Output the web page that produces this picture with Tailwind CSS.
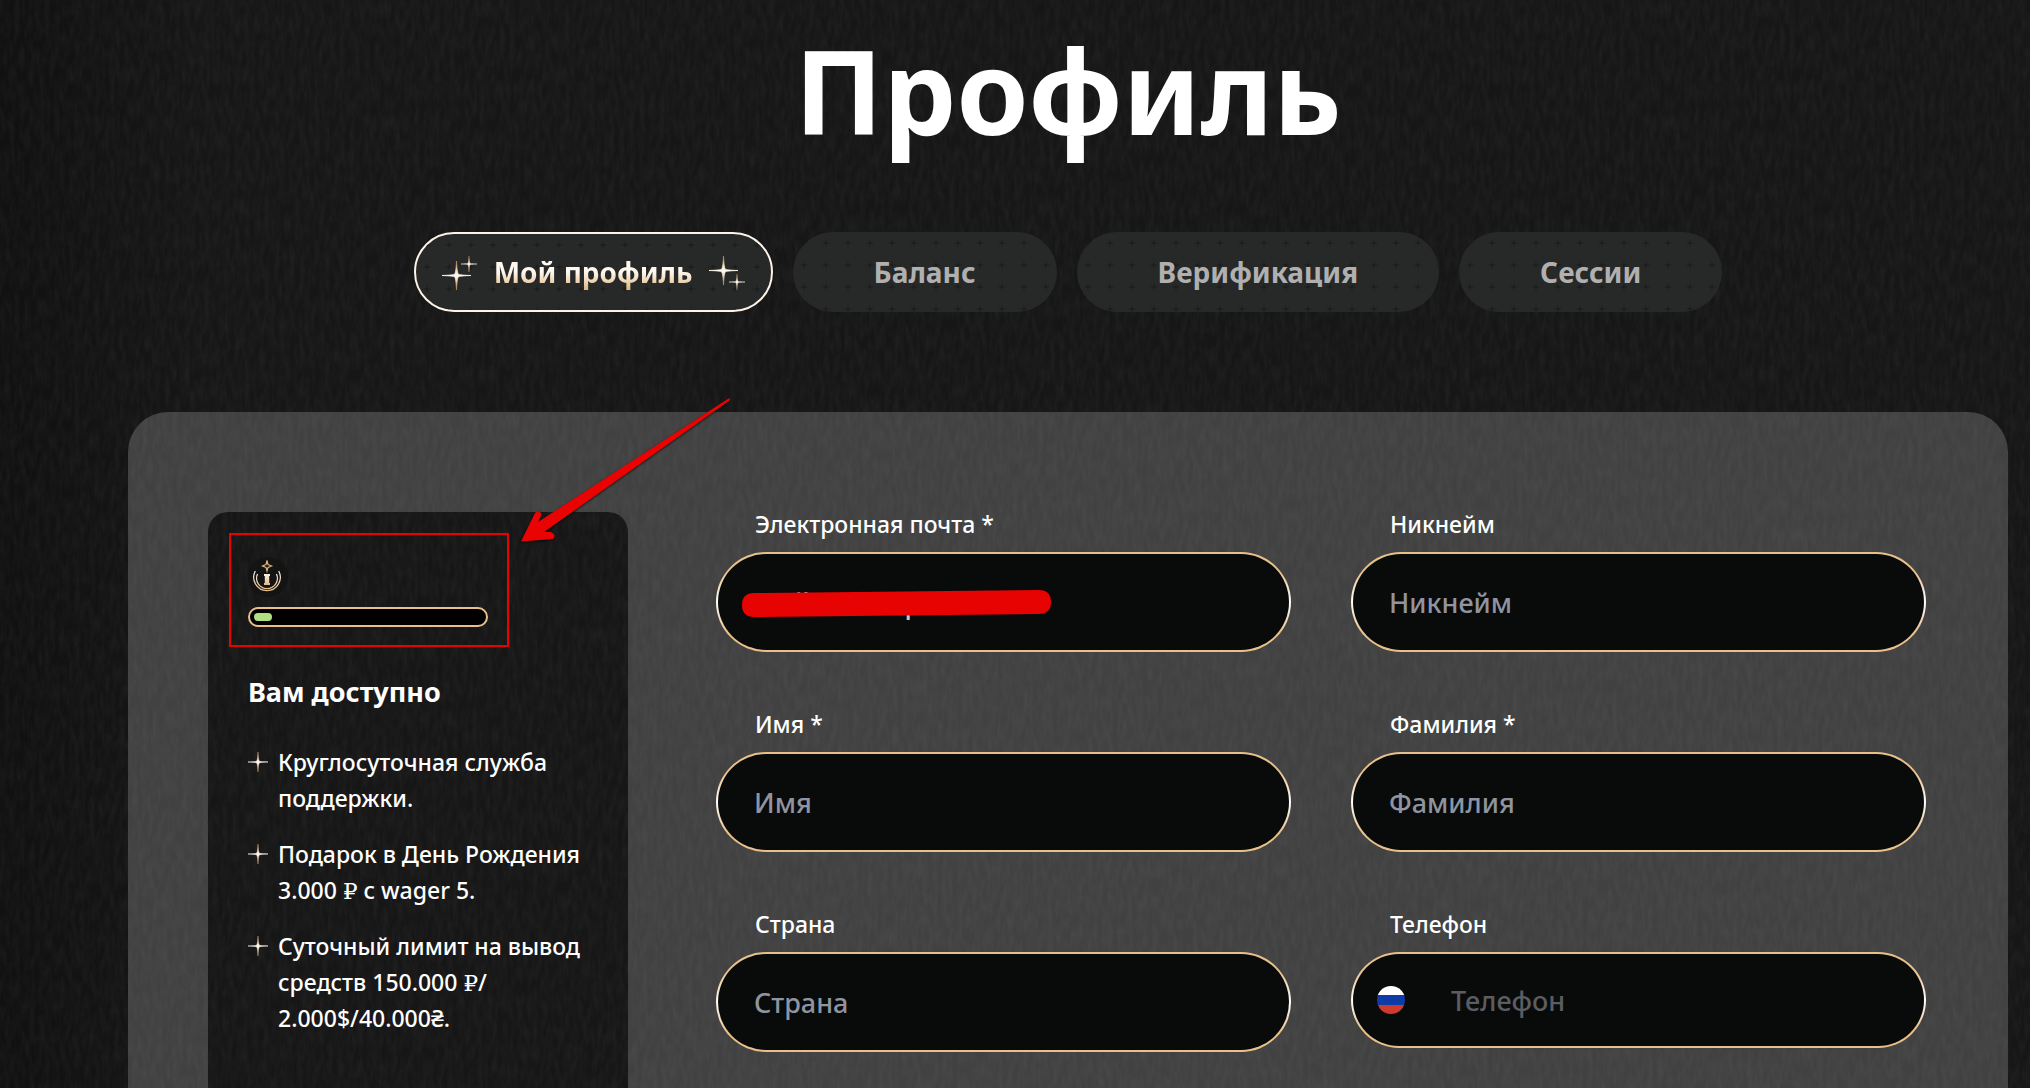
<!DOCTYPE html>
<html lang="ru">
<head>
    <meta charset="UTF-8">
    <meta name="viewport" content="width=device-width, initial-scale=1.0">
    <title>Профиль</title>
    <script src="https://cdn.jsdelivr.net/npm/@tailwindcss/browser@4"></script>
</head>
<body class="relative min-h-screen overflow-x-hidden bg-[#161616] font-['Noto_Sans','Open_Sans',sans-serif] text-white">
    <!-- Shared gradients, patterns and symbols -->
    <svg class="absolute size-0" aria-hidden="true">
        <defs>
            <linearGradient id="gold" x1="0" y1="0" x2="0" y2="1">
                <stop offset="0.05" stop-color="#b98a4e"/>
                <stop offset="0.42" stop-color="#fff3e4"/>
                <stop offset="0.55" stop-color="#fff8ef"/>
                <stop offset="0.95" stop-color="#b98a4e"/>
            </linearGradient>
            <linearGradient id="goldSoft" x1="0" y1="0" x2="0" y2="1">
                <stop offset="0" stop-color="#fdf3e6"/>
                <stop offset="1" stop-color="#e3bb85"/>
            </linearGradient>
            <pattern id="crosses" width="22" height="22" patternUnits="userSpaceOnUse">
                <path d="M11 6 L11.7 10.3 L16 11 L11.7 11.7 L11 16 L10.3 11.7 L6 11 L10.3 10.3 Z" fill="#1a1c1b"/>
            </pattern>
            <filter id="linen" x="0" y="0" width="100%" height="100%">
                <feTurbulence type="fractalNoise" baseFrequency="0.2 0.06" numOctaves="3" seed="4"/>
                <feColorMatrix values="0 0 0 0 1  0 0 0 0 1  0 0 0 0 1  0.07 0 0 0 -0.022"/>
            </filter>
            <symbol id="star" viewBox="0 0 28 28">
                <path d="M14 0 C14.4 9 15 12.6 16.4 13.1 C18 13.5 22 13.8 28 14 C22 14.2 18 14.5 16.4 14.9 C15 15.4 14.4 19 14 28 C13.6 19 13 15.4 11.6 14.9 C10 14.5 6 14.2 0 14 C6 13.8 10 13.5 11.6 13.1 C13 12.6 13.6 9 14 0 Z" fill="url(#gold)" stroke="url(#gold)" stroke-width="0.8"/>
            </symbol>
        </defs>
    </svg>
    <div class="absolute inset-0 bg-linear-to-r from-black/25 via-transparent via-10% to-transparent"></div>
    <svg class="absolute inset-0 size-full" aria-hidden="true"><rect width="100%" height="100%" filter="url(#linen)"/></svg>

    <main class="relative pt-5 pr-[22px] pl-32">
        <h1 class="text-center text-[116px] leading-[140px] font-bold">Профиль</h1>

        <!-- Tabs -->
        <nav class="mt-[72px] flex justify-center gap-5 text-[28px] leading-10 font-bold">
            <button class="relative flex h-20 items-center gap-4 overflow-hidden rounded-full border-2 border-[#fdf3e6] bg-[#272928] px-[26px]">
                <svg class="absolute inset-0 size-full" aria-hidden="true"><rect width="100%" height="100%" fill="url(#crosses)"/></svg>
                <svg class="relative h-9 w-9" viewBox="0 0 36 36" aria-hidden="true">
                    <use href="#star" x="0" y="7" width="29" height="29"/>
                    <use href="#star" x="19" y="2" width="16" height="16"/>
                </svg>
                <span class="relative bg-linear-to-b from-[#fff8ef] from-50% to-[#e3bb85] to-90% bg-clip-text text-transparent">Мой профиль</span>
                <svg class="relative h-9 w-9" viewBox="0 0 36 36" aria-hidden="true">
                    <use href="#star" x="0" y="2" width="29" height="29"/>
                    <use href="#star" x="20" y="20" width="16" height="16"/>
                </svg>
            </button>
            <button class="relative h-20 overflow-hidden rounded-full bg-[#272928] px-[81px] text-[#b0b0b0]">
                <svg class="absolute inset-0 size-full" aria-hidden="true"><rect width="100%" height="100%" fill="url(#crosses)"/></svg>
                <span class="relative">Баланс</span>
            </button>
            <button class="relative h-20 overflow-hidden rounded-full bg-[#272928] px-[81px] text-[#b0b0b0]">
                <svg class="absolute inset-0 size-full" aria-hidden="true"><rect width="100%" height="100%" fill="url(#crosses)"/></svg>
                <span class="relative">Верификация</span>
            </button>
            <button class="relative h-20 overflow-hidden rounded-full bg-[#272928] px-[81px] text-[#b0b0b0]">
                <svg class="absolute inset-0 size-full" aria-hidden="true"><rect width="100%" height="100%" fill="url(#crosses)"/></svg>
                <span class="relative">Сессии</span>
            </button>
        </nav>

        <!-- Profile panel -->
        <section class="relative mt-[100px] flex items-stretch gap-[88px] rounded-t-[40px] bg-[#414141] pt-[100px] pr-[82px] pl-20">
            <svg class="absolute inset-0 size-full rounded-t-[40px]" aria-hidden="true"><rect width="100%" height="100%" filter="url(#linen)"/></svg>

            <aside class="relative w-[420px] shrink-0 rounded-t-[20px] bg-[#161616] px-10 pt-[45px]">
                <svg class="absolute inset-0 size-full rounded-t-[20px]" aria-hidden="true"><rect width="100%" height="100%" filter="url(#linen)"/></svg>
                <div class="relative">
                    <!-- Level badge -->
                    <svg class="block size-10" viewBox="0 0 40 40" role="img" aria-label="Уровень I">
                        <circle cx="20" cy="20" r="20" fill="#141414"/>
                        <path d="M19 3.5 L20 7.6 L23.5 9 L20 10.4 L19 14 L18 10.4 L14.5 9 L18 7.6 Z" fill="none" stroke="#dcb27c" stroke-width="1.2"/>
                        <path d="M7.3 14 A13.3 13.3 0 1 0 30.7 14" fill="none" stroke="url(#goldSoft)" stroke-width="1.2"/>
                        <path d="M9.5 17 A10.4 10.4 0 1 0 28.5 17" fill="none" stroke="url(#goldSoft)" stroke-width="1.2"/>
                        <path d="M16 17 H22 V19 H21.2 V26 H22 V28 H16 V26 H16.8 V19 H16 Z" fill="url(#goldSoft)"/>
                    </svg>
                    <div class="mt-[10px] h-5 w-60 rounded-full border-2 border-[#e9c08a] bg-black p-1" role="progressbar" aria-valuenow="8" aria-valuemin="0" aria-valuemax="100">
                        <div class="h-full rounded-full bg-[#b0e080]" style="width: 8%"></div>
                    </div>

                    <h2 class="mt-[45px] text-[27px] leading-10 font-bold">Вам доступно</h2>
                    <ul class="mt-8 space-y-5 text-[23px] leading-9 font-medium whitespace-nowrap">
                        <li class="flex gap-[10px]">
                            <svg class="mt-2 size-5 shrink-0" aria-hidden="true"><use href="#star" width="20" height="20"/></svg>
                            <span>Круглосуточная служба<br>поддержки.</span>
                        </li>
                        <li class="flex gap-[10px]">
                            <svg class="mt-2 size-5 shrink-0" aria-hidden="true"><use href="#star" width="20" height="20"/></svg>
                            <span>Подарок в День Рождения<br>3.000 <span class="font-['DejaVu_Serif',serif] leading-none">₽</span> с wager 5.</span>
                        </li>
                        <li class="flex gap-[10px]">
                            <svg class="mt-2 size-5 shrink-0" aria-hidden="true"><use href="#star" width="20" height="20"/></svg>
                            <span>Суточный лимит на вывод<br>средств 150.000 <span class="font-['DejaVu_Serif',serif] leading-none">₽</span>/<br>2.000$/40.000₴.</span>
                        </li>
                    </ul>
                </div>

                <!-- Highlight frame around the level block -->
                <div class="absolute top-[21px] left-[21px] h-[114px] w-[280px] border-2 border-[#e60302]"></div>
                <svg class="absolute -top-[122px] left-[302px] h-[162px] w-[230px] drop-shadow-[0_1px_1px_rgba(0,0,0,0.7)]" viewBox="0 0 230 162" aria-hidden="true">
                    <path d="M218.5 8.5 Q221 8 219.5 10.5 L34 142 L41 142 Q47 145 43 149 L11 151.500 L25 123 Q28 119 31 123 Q32 125 28 132 Z" fill="#e90303"/>
                </svg>
            </aside>

            <form class="relative grid flex-1 grid-cols-2 content-start gap-x-[60px] gap-y-[60px] pb-10">
                <div class="relative">
                    <label for="email" class="block pl-[39px] text-[23px] leading-6 font-medium">Электронная почта *</label>
                    <div class="mt-4 rounded-full bg-linear-to-b from-[#e9c08a] from-20% via-white to-[#e9c08a] to-80% p-0.5">
                        <input id="email" type="email" value="mail@example.com" class="block h-24 w-full rounded-full bg-[#080b0a] px-9 text-[27px] font-medium text-[#c8c8c8] outline-none">
                    </div>
                    <!-- Marker over the address -->
                    <svg class="absolute top-[76px] left-[24px] h-8 w-[314px]" viewBox="0 0 314 32" aria-hidden="true">
                        <path d="M2 17 Q2 5 14 5 L299 2 Q311 2 311 14 Q311 26 299 26 L14 29 Q2 29 2 17 Z" fill="#e60302"/>
                    </svg>
                </div>
                <div>
                    <label for="nickname" class="block pl-[39px] text-[23px] leading-6 font-medium">Никнейм</label>
                    <div class="mt-4 rounded-full bg-linear-to-b from-[#e9c08a] from-20% via-white to-[#e9c08a] to-80% p-0.5">
                        <input id="nickname" type="text" placeholder="Никнейм" class="block h-24 w-full rounded-full bg-[#080b0a] px-9 text-[27px] font-medium outline-none placeholder:text-[#9094a0]">
                    </div>
                </div>
                <div>
                    <label for="name" class="block pl-[39px] text-[23px] leading-6 font-medium">Имя *</label>
                    <div class="mt-4 rounded-full bg-linear-to-b from-[#e9c08a] from-20% via-white to-[#e9c08a] to-80% p-0.5">
                        <input id="name" type="text" placeholder="Имя" class="block h-24 w-full rounded-full bg-[#080b0a] px-9 text-[27px] font-medium outline-none placeholder:text-[#9094a0]">
                    </div>
                </div>
                <div>
                    <label for="surname" class="block pl-[39px] text-[23px] leading-6 font-medium">Фамилия *</label>
                    <div class="mt-4 rounded-full bg-linear-to-b from-[#e9c08a] from-20% via-white to-[#e9c08a] to-80% p-0.5">
                        <input id="surname" type="text" placeholder="Фамилия" class="block h-24 w-full rounded-full bg-[#080b0a] px-9 text-[27px] font-medium outline-none placeholder:text-[#9094a0]">
                    </div>
                </div>
                <div>
                    <label for="country" class="block pl-[39px] text-[23px] leading-6 font-medium">Страна</label>
                    <div class="mt-4 rounded-full bg-linear-to-b from-[#e9c08a] from-20% via-white to-[#e9c08a] to-80% p-0.5">
                        <input id="country" type="text" placeholder="Страна" class="block h-24 w-full rounded-full bg-[#080b0a] px-9 text-[27px] font-medium outline-none placeholder:text-[#9094a0]">
                    </div>
                </div>
                <div>
                    <label for="phone" class="block pl-[39px] text-[23px] leading-6 font-medium">Телефон</label>
                    <div class="mt-4 rounded-full bg-linear-to-b from-[#e9c08a] from-20% via-white to-[#e9c08a] to-80% p-0.5">
                        <div class="flex h-[92px] items-center gap-[46px] rounded-full bg-[#080b0a] px-6">
                            <button type="button" class="size-7 shrink-0 overflow-hidden rounded-full" aria-label="Россия">
                                <svg class="size-7" viewBox="0 0 28 28">
                                    <rect width="28" height="9" fill="#fff"/>
                                    <rect y="9" width="28" height="10" fill="#0f3ba6"/>
                                    <rect y="19" width="28" height="9" fill="#cc3b2c"/>
                                </svg>
                            </button>
                            <input id="phone" type="tel" placeholder="Телефон" class="h-full w-full bg-transparent text-[27px] font-medium outline-none placeholder:text-[#5c5d63]">
                        </div>
                    </div>
                </div>
            </form>
        </section>
    </main>
</body>
</html>
